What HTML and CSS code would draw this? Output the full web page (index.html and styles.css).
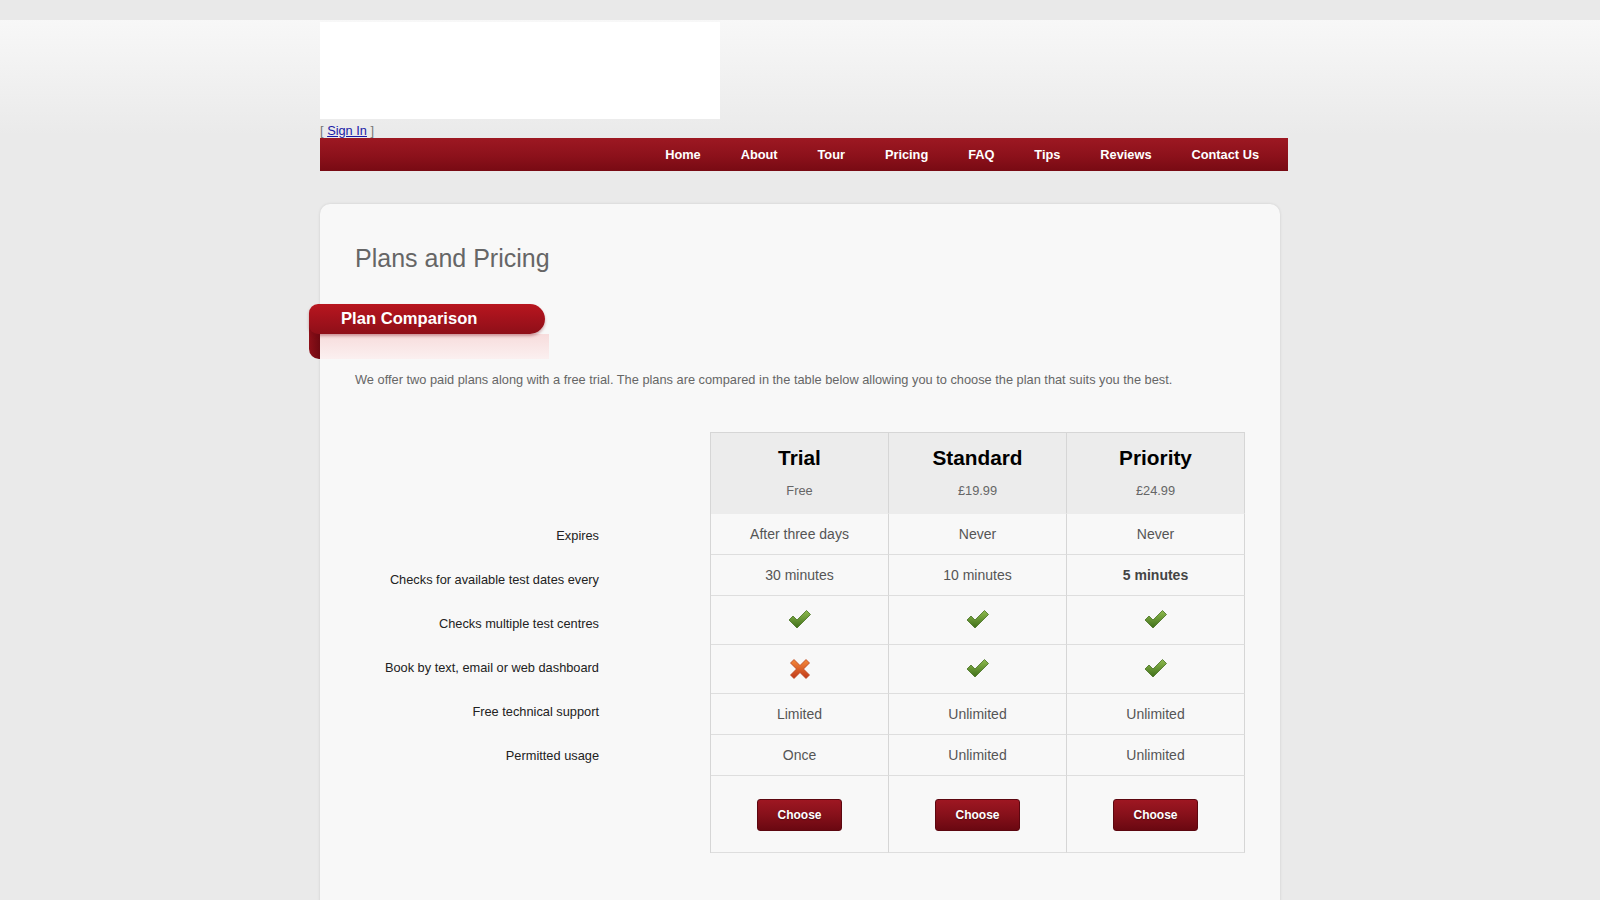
FILE: index.html
```html
<!DOCTYPE html>
<html lang="en">
<head>
<meta charset="utf-8">
<title>Plans and Pricing</title>
<link rel="stylesheet" href="styles.css">
</head>
<body>
<div class="topstrip"></div>
<div class="wrapper">
  <header class="header">
    <div class="logo"></div>
    <div class="signin">[ <a href="#">Sign In</a> ]</div>
    <nav class="nav">
      <a href="#">Home</a>
      <a href="#">About</a>
      <a href="#">Tour</a>
      <a href="#">Pricing</a>
      <a href="#">FAQ</a>
      <a href="#">Tips</a>
      <a href="#">Reviews</a>
      <a href="#">Contact Us</a>
    </nav>
  </header>

  <main class="card">
    <h1 class="title">Plans and Pricing</h1>
    <div class="ribbon-wrap">
      <div class="ribbon">Plan Comparison</div>
    </div>
    <p class="intro">We offer two paid plans along with a free trial. The plans are compared in the table below allowing you to choose the plan that suits you the best.</p>

    <div class="compare">
      <div class="labels">
        <div class="label">Expires</div>
        <div class="label">Checks for available test dates every</div>
        <div class="label">Checks multiple test centres</div>
        <div class="label">Book by text, email or web dashboard</div>
        <div class="label">Free technical support</div>
        <div class="label">Permitted usage</div>
      </div>

      <div class="plans">
        <div class="cell head"><div class="plan-name">Trial</div><div class="plan-price">Free</div></div>
        <div class="cell head"><div class="plan-name">Standard</div><div class="plan-price">£19.99</div></div>
        <div class="cell head"><div class="plan-name">Priority</div><div class="plan-price">£24.99</div></div>

        <div class="cell">After three days</div>
        <div class="cell">Never</div>
        <div class="cell">Never</div>

        <div class="cell">30 minutes</div>
        <div class="cell">10 minutes</div>
        <div class="cell strong">5 minutes</div>

        <div class="cell"><svg class="icon" viewBox="0 0 26 20" width="26" height="21"><defs><linearGradient id="g1" x1="0" y1="0" x2="0" y2="1"><stop offset="0" stop-color="#8fbb4e"/><stop offset="1" stop-color="#3f6f1a"/></linearGradient></defs><path d="M2 10.5 L6 6.5 L10 10.5 L19.5 1 L23.5 5 L10 18.5 Z" fill="url(#g1)" stroke="#456e20" stroke-width="0.8" stroke-linejoin="round"/></svg></div>
        <div class="cell"><svg class="icon" viewBox="0 0 26 20" width="26" height="21"><path d="M2 10.5 L6 6.5 L10 10.5 L19.5 1 L23.5 5 L10 18.5 Z" fill="url(#g1)" stroke="#456e20" stroke-width="0.8" stroke-linejoin="round"/></svg></div>
        <div class="cell"><svg class="icon" viewBox="0 0 26 20" width="26" height="21"><path d="M2 10.5 L6 6.5 L10 10.5 L19.5 1 L23.5 5 L10 18.5 Z" fill="url(#g1)" stroke="#456e20" stroke-width="0.8" stroke-linejoin="round"/></svg></div>

        <div class="cell"><svg class="icon" viewBox="0 0 22 22" width="22" height="22"><defs><linearGradient id="g2" x1="0" y1="0" x2="0" y2="1"><stop offset="0" stop-color="#f58a3a"/><stop offset="1" stop-color="#c0391a"/></linearGradient></defs><path d="M5 1.5 L11 7.5 L17 1.5 L20.5 5 L14.5 11 L20.5 17 L17 20.5 L11 14.5 L5 20.5 L1.5 17 L7.5 11 L1.5 5 Z" fill="url(#g2)" stroke="#b8401c" stroke-width="0.8" stroke-linejoin="round"/></svg></div>
        <div class="cell"><svg class="icon" viewBox="0 0 26 20" width="26" height="21"><path d="M2 10.5 L6 6.5 L10 10.5 L19.5 1 L23.5 5 L10 18.5 Z" fill="url(#g1)" stroke="#456e20" stroke-width="0.8" stroke-linejoin="round"/></svg></div>
        <div class="cell"><svg class="icon" viewBox="0 0 26 20" width="26" height="21"><path d="M2 10.5 L6 6.5 L10 10.5 L19.5 1 L23.5 5 L10 18.5 Z" fill="url(#g1)" stroke="#456e20" stroke-width="0.8" stroke-linejoin="round"/></svg></div>

        <div class="cell">Limited</div>
        <div class="cell">Unlimited</div>
        <div class="cell">Unlimited</div>

        <div class="cell">Once</div>
        <div class="cell">Unlimited</div>
        <div class="cell">Unlimited</div>

        <div class="cell"><button class="choose">Choose</button></div>
        <div class="cell"><button class="choose">Choose</button></div>
        <div class="cell"><button class="choose">Choose</button></div>
      </div>
    </div>
  </main>
</div>
</body>
</html>
```

FILE: styles.css
```css
html, body {
  margin: 0;
  padding: 0;
}

body {
  font-family: "Liberation Sans", Arial, sans-serif;
  background: linear-gradient(to bottom, #fafafa 0, #eaeaea 135px, #eaeaea 100%) no-repeat;
  background-color: #eaeaea;
  min-height: 900px;
}

.topstrip {
  height: 20px;
  background: #e9e9e9;
}

.wrapper {
  margin-left: 320px;
  width: 968px;
}

.header {
  display: flex;
  flex-direction: column;
}

.logo {
  margin-top: 2px;
  width: 400px;
  height: 97px;
  background: #ffffff;
}

.signin {
  padding-top: 4px;
  height: 15px;
  line-height: 16px;
  font-size: 12.8px;
  color: #777;
}

.signin a {
  color: #1a1aa6;
  text-decoration: underline;
}

.nav {
  height: 33px;
  display: flex;
  justify-content: flex-end;
  align-items: center;
  gap: 39.9px;
  padding-right: 29px;
  background: linear-gradient(to bottom, #9d1822 0%, #8c111b 55%, #780a13 100%);
}

.nav a {
  color: #ffffff;
  font-weight: bold;
  font-size: 12.8px;
  text-decoration: none;
}

.card {
  margin-top: 32.5px;
  width: 960px;
  box-sizing: border-box;
  background: #f8f8f8;
  border-radius: 10px;
  box-shadow: 0 0 3px rgba(0, 0, 0, 0.12);
  padding: 39.5px 35px 60px 35px;
}

.title {
  margin: 0;
  font-size: 25px;
  line-height: 30px;
  font-weight: normal;
  color: #666666;
}

.ribbon-wrap {
  position: relative;
  margin: 31px 0 0 -46px;
  width: 240px;
  height: 55px;
}

.ribbon-wrap::before {
  content: "";
  position: absolute;
  left: 0;
  top: 12px;
  width: 12px;
  height: 43px;
  background: linear-gradient(to right, #8e1019, #6a0810);
  border-radius: 0 0 0 10px;
}

.ribbon-wrap::after {
  content: "";
  position: absolute;
  left: 11px;
  top: 30px;
  right: 0;
  bottom: 0;
  background: linear-gradient(to bottom, #f7dcdc, #fbf0f0);
}

.ribbon {
  position: relative;
  z-index: 1;
  width: 204px;
  height: 30px;
  line-height: 29px;
  padding-left: 32px;
  font-size: 16.6px;
  font-weight: bold;
  color: #ffffff;
  border-radius: 9px 15px 15px 9px;
  background: linear-gradient(to bottom, #b8161f 0%, #a3121c 50%, #8e0f18 100%);
  box-shadow: 0 2px 3px rgba(120, 10, 20, 0.35);
}

.intro {
  margin: 12.5px 0 0 0;
  font-size: 12.8px;
  line-height: 16px;
  color: #666666;
}

.compare {
  margin-top: 44px;
  display: flex;
  align-items: flex-start;
}

.labels {
  width: 244px;
  padding-top: 82px;
  margin-right: 111px;
  text-align: right;
}

.label {
  height: 44px;
  line-height: 44px;
  font-size: 12.8px;
  color: #222222;
  white-space: nowrap;
}

.plans {
  display: grid;
  grid-template-columns: 178px 178px 178px;
  grid-template-rows: 81px 41px 41px 49px 49px 41px 41px 77px;
  border-top: 1px solid #d6d6d6;
  border-left: 1px solid #d6d6d6;
}

.cell {
  box-sizing: border-box;
  border-right: 1px solid #d6d6d6;
  border-bottom: 1px solid #dedede;
  display: flex;
  align-items: center;
  justify-content: center;
  font-size: 14px;
  color: #555555;
  background: #f8f8f8;
}

.cell.strong {
  font-weight: bold;
  color: #444444;
}

.cell.head {
  flex-direction: column;
  justify-content: flex-start;
  padding-top: 13.5px;
  background: #ececec;
  border-bottom-color: #ececec;
}

.plan-name {
  font-size: 20.8px;
  line-height: 24px;
  font-weight: bold;
  color: #000000;
}

.plan-price {
  margin-top: 12.5px;
  font-size: 12.8px;
  line-height: 16px;
  color: #666666;
}

.icon {
  display: block;
}

.choose {
  width: 85px;
  height: 32px;
  margin-top: 3px;
  border: 1px solid #5c0710;
  border-radius: 3px;
  background: linear-gradient(to bottom, #9e1722 0%, #86101a 50%, #6a0811 100%);
  color: #ffffff;
  font-family: "Liberation Sans", Arial, sans-serif;
  font-size: 12px;
  font-weight: bold;
  text-shadow: 0 1px 1px rgba(0, 0, 0, 0.4);
  cursor: pointer;
}
```
